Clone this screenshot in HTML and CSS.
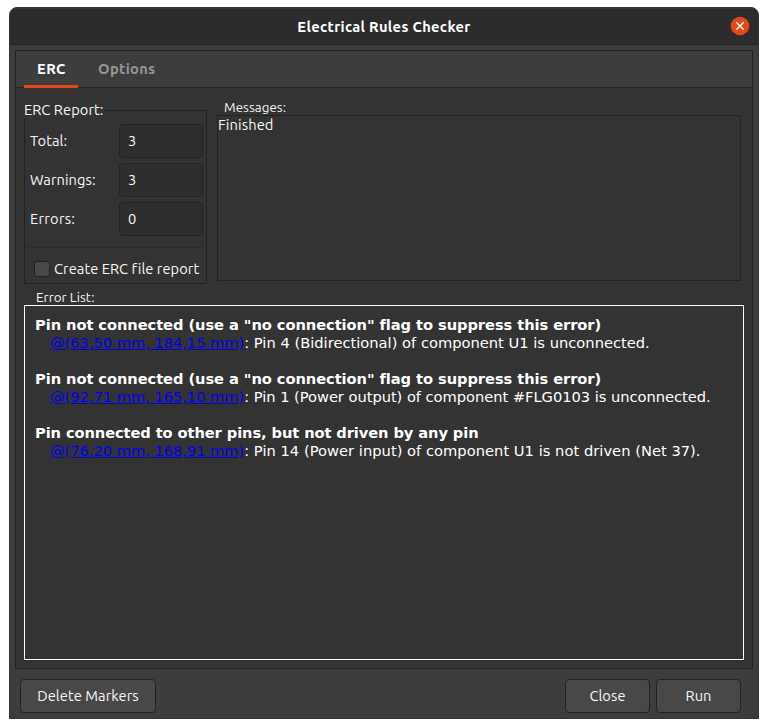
FILE: index.html
```html
<!DOCTYPE html>
<html lang="en">
<head>
<meta charset="utf-8">
<title>Electrical Rules Checker</title>
<link rel="stylesheet" href="styles.css">
</head>
<body>
<main class="window">
  <header class="titlebar">
    <h1 class="title">Electrical Rules Checker</h1>
    <button class="close" aria-label="Close window">
      <svg width="20" height="20" viewBox="0 0 20 20"><circle cx="10" cy="10" r="9.3" fill="#e2491a"/><path d="M6.3 6.3l7.4 7.4M13.7 6.3l-7.4 7.4" stroke="#fff" stroke-width="1.3"/></svg>
    </button>
  </header>
  <section class="notebook">
    <nav class="tabs">
      <span class="tab active">ERC</span>
      <span class="tab">Options</span>
    </nav>
    <div class="page">
      <div class="top">
        <div class="report">
          <div class="legend">ERC Report:</div>
          <div class="rows">
            <label class="row">Total:<span class="entry">3</span></label>
            <label class="row">Warnings:<span class="entry">3</span></label>
            <label class="row errors">Errors:<span class="entry">0</span></label>
          </div>
          <div class="create"><span class="check"></span>Create ERC file report</div>
        </div>
        <div class="messages">
          <div class="caption">Messages:</div>
          <div class="log">Finished</div>
        </div>
      </div>
      <div class="list-caption">Error List:</div>
      <div class="list">
        <div class="item"><b>Pin not connected (use a "no connection" flag to suppress this error)</b><p><a>@(63,50 mm, 184,15 mm)</a>: Pin 4 (Bidirectional) of component U1 is unconnected.</p></div>
        <div class="item output"><b>Pin not connected (use a "no connection" flag to suppress this error)</b><p><a>@(92,71 mm, 165,10 mm)</a>: Pin 1 (Power output) of component #FLG0103 is unconnected.</p></div>
        <div class="item input"><b>Pin connected to other pins, but not driven by any pin</b><p><a>@(76,20 mm, 168,91 mm)</a>: Pin 14 (Power input) of component U1 is not driven (Net 37).</p></div>
      </div>
    </div>
  </section>
  <footer class="actions">
    <button class="btn delete">Delete Markers</button>
    <button class="btn">Close</button>
    <button class="btn">Run</button>
  </footer>
</main>
</body>
</html>
```
FILE: styles.css
```css
* { box-sizing: border-box; }
body {
  margin: 0;
  padding: 7px 9px 9px;
  background: #fff;
  color: #f7f7f7;
  font: 14.67px/18px Ubuntu, "Noto Sans", sans-serif;
  letter-spacing: 0.06px;
  white-space: nowrap;
}
button { font: inherit; color: inherit; letter-spacing: inherit; padding: 0; margin: 0; }
.window {
  width: 750px;
  height: 712px;
  display: flex;
  flex-direction: column;
  background: #3d3d3d;
  border: 1px solid #353535;
  border-radius: 8px 8px 0 0;
  overflow: hidden;
}
.titlebar {
  height: 37px;
  flex: none;
  display: grid;
  grid-template-columns: 40px 1fr 40px;
  align-items: center;
  background: #2c2c2c;
  border-top: 1px solid #393939;
  border-bottom: 1px solid #232323;
}
.title { grid-column: 2; margin: 0; text-align: center; font-size: 14.67px; line-height: 18px; letter-spacing: 0.34px; font-weight: 700; color: #fff; }
.close { justify-self: end; margin: -2px 8px 0 0; width: 20px; height: 20px; border: 0; background: none; }
.close svg { display: block; }
.notebook {
  margin: 5px 5px 0;
  height: 619px;
  flex: none;
  border: 1px solid #222;
  background: #333;
}
.tabs { height: 37px; display: flex; padding-left: 8px; background: #3d3d3d; border-bottom: 1px solid #222; }
.tab { height: 37px; padding: 9px 13px 0; font-weight: 700; letter-spacing: 0.35px; color: #969696; }
.tab + .tab { margin-left: 7px; }
.tab.active { width: 54px; letter-spacing: 0.5px; color: #fff; border-bottom: 3px solid #e2491a; }
.page { padding: 0 8px; }
.top { height: 196px; display: flex; gap: 10px; }
.report { width: 183px; margin-top: 13px; display: flex; flex-direction: column; }
.legend { height: 18px; display: flex; align-items: center; }
.legend::after { content: ""; flex: 1; height: 8px; align-self: flex-end; border: solid #222; border-width: 1px 1px 0 0; }
.rows { height: 128px; padding: 5px 3px 0 5px; display: grid; grid-auto-rows: 34px; gap: 5px; border: solid #222; border-width: 0 1px; }
.row { display: flex; align-items: center; justify-content: space-between; }
.errors { letter-spacing: 0.25px; }
.entry { width: 84px; height: 34px; padding: 7px 8px; border: 1px solid #222; border-radius: 4px; background: #2e2e2e; }
.create { height: 37px; padding: 7px 0 0 9px; display: flex; align-items: center; gap: 4px; border: 1px solid #222; border-top-color: #2c2c2c; }
.check { width: 16px; height: 16px; border: 1px solid #222; border-radius: 3px; background: #484848; }
.messages { width: 524px; }
.caption { height: 27px; padding: 11px 0 0 7px; font-size: 13.33px; line-height: 16px; }
.caption, .list-caption { line-height: 18px; }
.log { height: 166px; border: 1px solid #222; letter-spacing: 0.12px; }
.list-caption { height: 21px; padding: 5px 0 0 12px; font-size: 13.33px; }
.list { height: 355px; padding: 10px; border: 1px solid #fff; font: 14.67px/18px "DejaVu Sans", sans-serif; letter-spacing: 0; color: #fff; }
.item { height: 54px; }
.item b { display: block; letter-spacing: -0.07px; }
.item p { margin: 0 0 0 15px; letter-spacing: 0.01px; }
.item a { color: #0000f0; text-decoration: underline; letter-spacing: -0.04px; }
.item.output p { letter-spacing: -0.035px; }
.item.input b { letter-spacing: -0.1px; }
.item.input p { letter-spacing: 0.03px; }
.actions { display: flex; gap: 6px; margin-top: 10px; padding: 0 17px 0 10px; }
.btn { width: 85px; height: 34px; background: #484848; border: 1px solid #222; border-radius: 4px; }
.btn.delete { width: 136px; margin-right: auto; }
```
